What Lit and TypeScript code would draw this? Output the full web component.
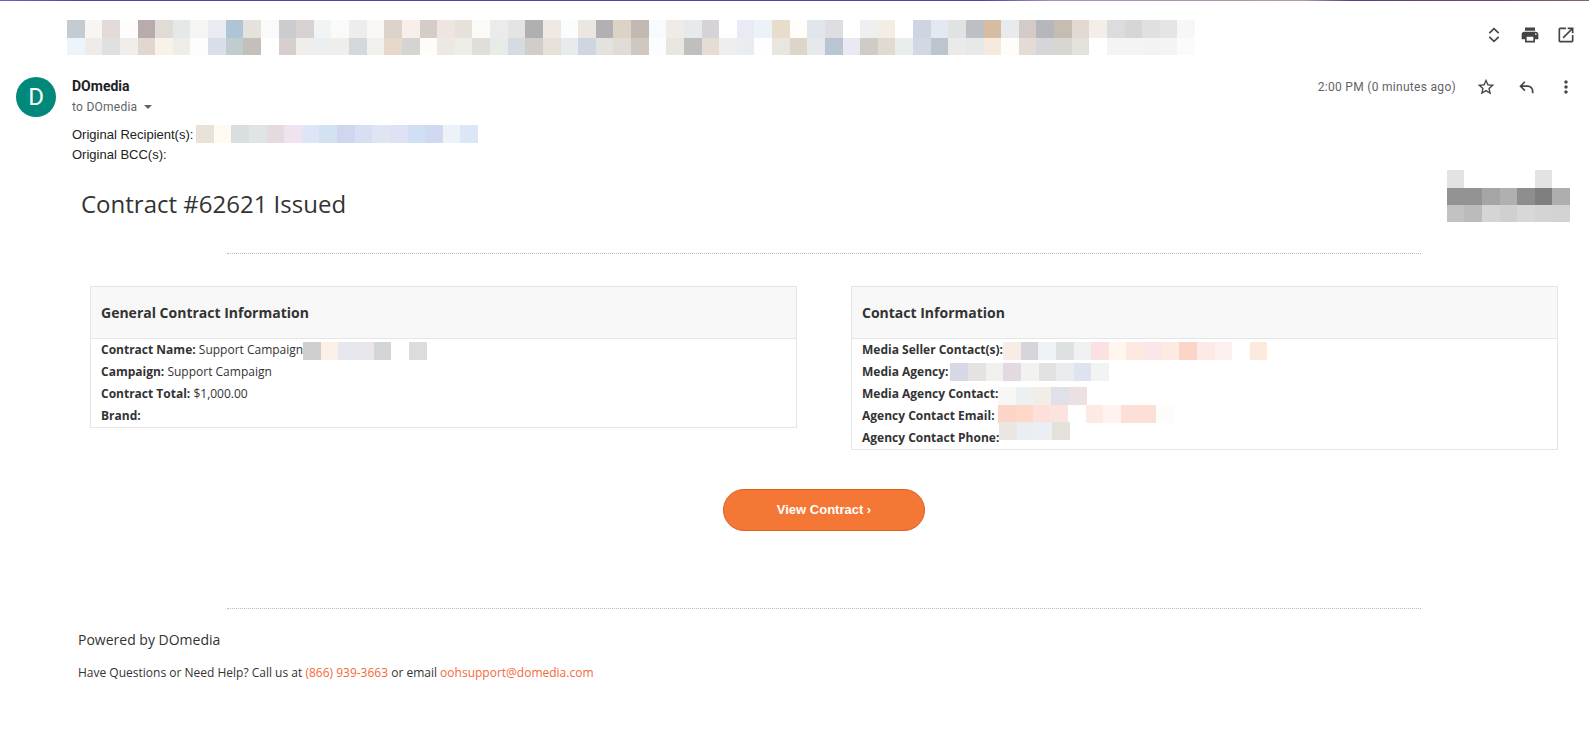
import { LitElement, html, css, svg } from "lit";
import { customElement } from "lit/decorators.js";

const topRow1 = "c3ccd1 f8f6f2 e2dbd7 fefdfb b9aaac e0dcd5 e5e8e8 f5f6f4 e8ebf0 afc4d7 e5e2dc fafafa cbcccd d8d2d3 f0f4f4 fafafa eeeded f9f8f6 ddd3ca f8efeb d4ccc6 eee5e0 e6e2da fbfaf7 ebebeb e5e4e2 b0b0b1 f0e9e3 f9fdfe ebe6df b3b0b3 ddd2c6 c2b9b3 f7fbfd f1ebe7 e6eaec d5d3d6 ffffff e8ebf3 ecf2f8 e8dccd fffefa e1e6ed dedde1 ffffff eeeff0 f4ede3 ffffff cfd5e0 e2e9f3 dfe3e1 bcbfc3 d6bda2 e9eaeb d4cac8 b6b7bc c5bcb2 e2d9d2 f3eee8 dcdcde d6d6d6 dfe0df e5e5e3 f7f7f7".split(" ");
const topRow2 = "eef4fb efebe8 e0e0e2 f1edea e0d7d0 f8f2e8 eeede8 fcfdfd d8dfe8 c1ccd1 c4bfba ffffff d7cfce f0eeeb ebefef f0eeea d5d8db f1f0ec e6d8ca d4d4d2 fdfcf9 ede8e4 eeeee9 e0ded9 e9ebe9 d5dbe3 d1cdcb e6e0d8 e7ebee cfd6df e3e2df e0dcd5 cfc8c1 fcfdfe e9e5df bfbfbe e4dcd5 efeeec e9edf0 fdfeff e9e6e0 ddd6c8 e5e9ec b9c5d3 eae9f2 d0cbc6 e2dad0 e9eded d2d8e3 bcc4cc eaeaea e7e9e8 f6eade fffdf9 e4dad6 d5d5da d8d6d0 e2e1da ffffff f4f4f4 f4f4f4 f3f3f3 f4f4f4 fbfbfb".split(" ");
const recipients = "e8e2d9 fffbf2 d9dee0 e0e4e6 e4dadf efe3f0 dde5f6 d2e2f0 ced7ef d8dff2 e0e5f4 dfe2f5 cfe0f5 d0d9f1 edf2f9 dbe6f6".split(" ");
const logo = [
  "e3e3e3 ffffff ffffff ffffff ffffff e3e3e3 ffffff".split(" "),
  "939393 939393 a5a5a5 b0b0b0 8e8e8e 7f7f7f aeaeae".split(" "),
  "c2c2c2 bbbbbb d5d5d5 d0d0d0 d8d8d8 d4d4d4 d2d2d2".split(" "),
];

const ICONS: Record<string, string> = {
  unfold: "M12 5.6L16.9 10.4 18.3 9 12 3 5.7 9 7.1 10.4zM12 18.4L7.1 13.6 5.7 15 12 21 18.3 15 16.9 13.6z",
  print: "M19 8H5c-1.66 0-3 1.34-3 3v6h4v4h12v-4h4v-6c0-1.66-1.34-3-3-3zm-3 11H8v-5h8v5zm3-7c-.55 0-1-.45-1-1s.45-1 1-1 1 .45 1 1-.45 1-1 1zm-1-9H6v4h12V3z",
  open: "M19 19H5V5h7V3H5c-1.11 0-2 .9-2 2v14c0 1.1.89 2 2 2h14c1.1 0 2-.9 2-2v-7h-2v7zM14 3v2h3.59l-9.83 9.83 1.41 1.41L19 6.41V10h2V3h-7z",
  star: "M22 9.24l-7.19-.62L12 2 9.19 8.63 2 9.24l5.46 4.73L5.82 21 12 17.27 18.18 21l-1.63-7.03L22 9.24zM12 15.4l-3.76 2.27 1-4.28-3.32-2.88 4.38-.38L12 6.1l1.71 4.04 4.38.38-3.32 2.88 1 4.28L12 15.4z",
  reply: "M21 19.5h-2V17a5 5 0 0 0-5-5H7.8l3.6 3.6L10 17l-6-6 6-6 1.4 1.4L7.8 10H14a7 7 0 0 1 7 7z",
  more: "M12 8c1.1 0 2-.9 2-2s-.9-2-2-2-2 .9-2 2 .9 2 2 2zm0 2c-1.1 0-2 .9-2 2s.9 2 2 2 2-.9 2-2-.9-2-2-2zm0 6c-1.1 0-2 .9-2 2s.9 2 2 2 2-.9 2-2-.9-2-2-2z",
};
const icon = (n: string) => html`<svg class="icon" viewBox="0 0 24 24">${svg`<path d=${ICONS[n]}></path>`}</svg>`;
const cells = (list: string[], cls = "cell") =>
  list.map((c) => html`<span class=${cls} style="background:#${c}"></span>`);

@customElement("app-root")
export class AppRoot extends LitElement {
  static styles = css`
    :host { display: block; height: 754px; overflow: hidden; background: #fff; color: #222; font-family: "Open Sans", sans-serif; }
    .topbar { height: 1px; background: linear-gradient(90deg, #7a5cc8 0%, #5b3fa8 5%, #5b3fa8 62%, #a98fb8 66%, #b39aa8 82%, #5b3f80 85%, #6d4a72 94%, #8f5f70 100%); }
    .subject { display: flex; align-items: flex-start; padding: 19px 13px 0 67px; height: 57px; box-sizing: border-box; }
    .strip { display: grid; grid-template-columns: repeat(64, 17.64px); grid-template-rows: 18px 17px; }
    .cell { display: block; }
    .tools { margin-left: auto; display: flex; gap: 16px; padding-top: 5px; }
    .icon { width: 20px; height: 20px; fill: #444; display: block; }
    .msg { display: flex; padding: 19px 13px 0 16px; height: 67px; box-sizing: border-box; }
    .avatar { width: 40px; height: 40px; border-radius: 50%; background: #00897b; color: #fff; font: 400 24px/40px Roboto, sans-serif; text-align: center; flex: none; }
    .who { margin-left: 16px; font-family: Roboto, sans-serif; }
    .name { font-size: 14px; font-weight: 700; line-height: 18px; color: #202124; }
    .to { font-size: 12px; letter-spacing: 0.25px; line-height: 20px; color: #5f6368; display: flex; align-items: center; gap: 7px; margin-top: 2px; }
    .caret { width: 0; height: 0; border: 4px solid transparent; border-top: 4px solid #5f6368; border-bottom: 0; }
    .meta { margin-left: auto; display: flex; align-items: flex-start; font: 12px/20px Roboto, sans-serif; letter-spacing: 0.3px; color: #5f6368; }
    .time { margin-right: 20px; }
    .acts { display: flex; gap: 20px; }
    .orig { padding: 0 0 0 72px; font: 13px/20px "Liberation Sans", Arial, sans-serif; color: #222; height: 43px; }
    .orig-row { display: flex; align-items: flex-start; height: 18px; margin-bottom: 2px; }
    .orig-label { width: 124px; flex: none; }
    .recips { display: grid; grid-template-columns: repeat(16, 17.64px); height: 18px; }
    .titlebar { display: flex; justify-content: space-between; padding: 0 19px 0 81px; height: 52px; margin-top: 2px; }
    h1 { margin: 0; padding-top: 8px; font: 400 24px/52px "Open Sans", sans-serif; color: #333; }
    .logo { display: grid; grid-template-columns: repeat(7, 17.64px); grid-template-rows: 18px 17px 17px; }
    .rule { margin: 31px 168px 0 227px; border-top: 1px dotted #bbb; }
    .tables { display: flex; align-items: flex-start; gap: 54px; padding: 32px 31px 0 90px; }
    .panel { width: 707px; box-sizing: border-box; border: 1px solid #e5e5e5; }
    .panel h2 { margin: 0; background: #f8f8f8; border-bottom: 1px solid #e5e5e5; font: 700 14px/51px "Open Sans", sans-serif; color: #333; padding: 0 10px; }
    .rows { font-size: 12px; line-height: 22px; color: #333; padding: 0 10px; }
    .row { display: flex; height: 22px; }
    .row b { font-weight: 700; white-space: pre; }
    .v { white-space: pre; }
    .blur { display: grid; grid-auto-flow: column; grid-auto-columns: 17.64px; height: 18px; }
    .cta { display: flex; justify-content: center; padding: 39px 0 0 59px; }
    .btn { width: 202px; height: 42px; box-sizing: border-box; background: #f47736; border: 1px solid #e0601a; border-radius: 21px; color: #fff; font: 700 13px/40px "Liberation Sans", sans-serif; text-align: center; text-decoration: none; }
    .rule2 { margin-top: 77px; }
    .foot { padding: 21px 0 0 78px; }
    .pw { font-size: 14px; line-height: 20px; color: #333; }
    .help { font-size: 12px; line-height: 16px; color: #333; margin-top: 15px; }
    .foot a { color: #f4693a; text-decoration: none; }
  `;

  row(label: string, value: string, blur: string[] = [], dx = 0, dy = 3) {
    return html`<div class="row"><b>${label}</b>${value ? html`<span class="v"> ${value}</span>` : ""}${blur.length
      ? html`<span class="blur" style="margin-left:${dx}px;margin-top:${dy}px">${cells(blur)}</span>`
      : ""}</div>`;
  }

  render() {
    return html`
      <div class="topbar"></div>
      <div class="subject">
        <div class="strip">${cells(topRow1)}${cells(topRow2)}</div>
        <div class="tools">${icon("unfold")}${icon("print")}${icon("open")}</div>
      </div>
      <div class="msg">
        <div class="avatar">D</div>
        <div class="who">
          <div class="name">DOmedia</div>
          <div class="to">to DOmedia <span class="caret"></span></div>
        </div>
        <div class="meta">
          <span class="time">2:00 PM (0 minutes ago)</span>
          <div class="acts">${icon("star")}${icon("reply")}${icon("more")}</div>
        </div>
      </div>
      <div class="orig">
        <div class="orig-row"><span class="orig-label">Original Recipient(s):</span><span class="recips">${cells(recipients)}</span></div>
        <div class="orig-row">Original BCC(s):</div>
      </div>
      <div class="titlebar">
        <h1>Contract #62621 Issued</h1>
        <div class="logo">${logo.map((r) => cells(r))}</div>
      </div>
      <div class="rule"></div>
      <div class="tables">
        <div class="panel">
          <h2>General Contract Information</h2>
          <div class="rows">
            ${this.row("Contract Name:", "Support Campaign", "cfcfcf fdf1e7 e7e7ee e9e7ec d2d6d7 ffffff dcdcdc".split(" "))}
            ${this.row("Campaign:", "Support Campaign")}
            ${this.row("Contract Total:", "$1,000.00")}
            ${this.row("Brand:", "")}
          </div>
        </div>
        <div class="panel">
          <h2>Contact Information</h2>
          <div class="rows">
            ${this.row("Media Seller Contact(s):", "", "f7ece6 d7d4dc f0f3f6 dde1e2 f0f1f3 fbe1e4 fff6ee fde9df fbe7ea fdeae1 fbd5c8 fde9e5 fcf0f1 ffffff fdeade".split(" "), 0, 3)}
            ${this.row("Media Agency:", "", "d6d8e6 e4e3e2 f1f0ef e3d9e0 f2f3f1 e3e2e2 e9ecef dde4f0 f2f4f3".split(" "), 2, 2)}
            ${this.row("Media Agency Contact:", "", "f7f7f6 ecf0f0 f4ede5 e0e1e8 ebe0e2".split(" "), 0, 4)}
            ${this.row("Agency Contact Email:", "", "fcd5c8 fdd8c8 fde0da fbe3df ffffff fdeae2 fef3f1 fcdfd6 fcdfd6 fefcfb".split(" "), 3, 0)}
            ${this.row("Agency Contact Phone:", "", "ebe6e2 eaedf2 ebeef2 e4e1da".split(" "), 0, -5)}
          </div>
        </div>
      </div>
      <div class="cta"><a class="btn" href="#">View Contract ›</a></div>
      <div class="rule rule2"></div>
      <div class="foot">
        <div class="pw">Powered by DOmedia</div>
        <div class="help">Have Questions or Need Help? Call us at <a href="#">(866) 939-3663</a> or email <a href="#">oohsupport@domedia.com</a></div>
      </div>
    `;
  }
}
